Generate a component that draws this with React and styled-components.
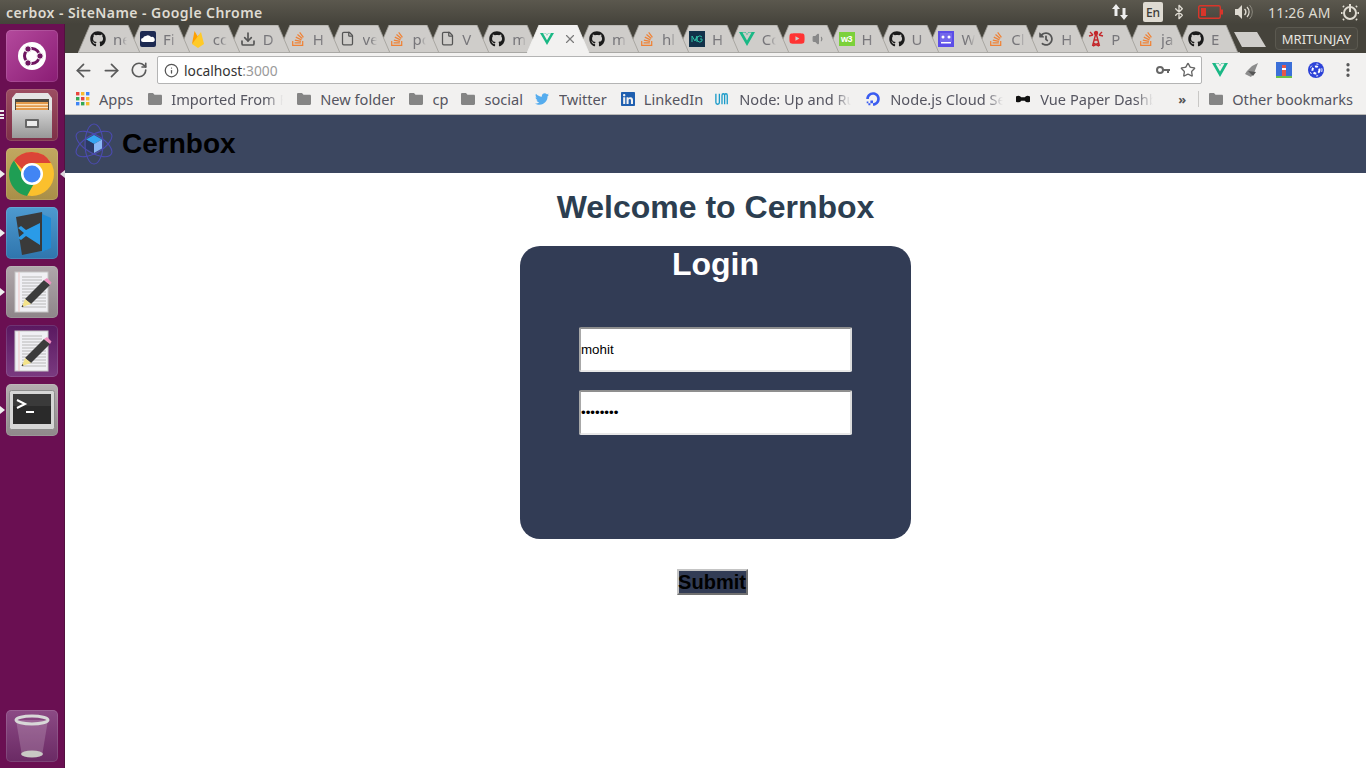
import React from 'react';
import styled, { createGlobalStyle } from 'styled-components';
import { FaGithub, FaStackOverflow, FaTwitter, FaLinkedin, FaYoutube, FaDigitalOcean, FaHistory } from 'react-icons/fa';
import { SiVuedotjs } from 'react-icons/si';
import { ArrowLeft, ArrowRight, RotateCw, Info, Star, Download, File, Volume1, X, Bluetooth, MoreVertical } from 'lucide-react';

const Global = createGlobalStyle`
  html, body { margin: 0; padding: 0; background: #fff; }
  #root { width: 1366px; height: 768px; overflow: hidden; }
  * { box-sizing: border-box; }
`;

const UI = `"Noto Sans", "Open Sans", sans-serif`;
const PAGE = `"Liberation Sans", Arial, sans-serif`;

const Desktop = styled.div`display: flex; flex-direction: column; width: 1366px; height: 768px;`;
const TopPanel = styled.header`
  height: 24px; flex: none; display: flex; align-items: center; padding: 0 0 0 6px;
  background: linear-gradient(#5b584e, #45433b);
  color: #dfdbd2; font: 600 14px ${UI};
`;
const WindowTitle = styled.div`flex: 1; letter-spacing: 0.44px;`;
const Indicators = styled.div`display: flex; align-items: center; height: 24px;`;
const EnBadge = styled.div`
  width: 20px; height: 20px; margin: 0 8px 0 14px; background: #dfdbd2; color: #3c3b37; border-radius: 2px;
  display: flex; align-items: center; justify-content: center; font: 500 12px ${UI};
`;
const Clock = styled.div`width: 61px; margin: 0 10px 0 14px; font: 400 14px ${UI}; letter-spacing: .2px; white-space: nowrap;`;
const Ind = styled.span`display: inline-flex; margin-right: ${p => p.$mr || 0}px;`;

const Below = styled.div`flex: 1; display: flex; min-height: 0;`;
const Launcher = styled.nav`
  width: 65px; flex: none; display: flex; flex-direction: column; gap: 7px; padding: 6px 0 6px 6px;
  background: #6a0f52; border-right: 1px solid #53103f;
`;
const Tile = styled.div`
  position: relative; width: 52px; height: 52px; border-radius: 5px; background: ${p => p.$bg};
  display: flex; align-items: center; justify-content: center; box-shadow: inset 0 0 0 1px rgba(255,255,255,.12);
  margin-top: ${p => p.$push ? 'auto' : '0'};
`;
const Pip = styled.span`
  position: absolute; top: 50%; margin-top: -4px; ${p => p.$right ? 'right: -7px; border-right: 5px solid #dcd6dc;' : 'left: -6px; border-left: 5px solid #eee;'}
  border-top: 4px solid transparent; border-bottom: 4px solid transparent; width: 0; height: 0;
`;
const Stack = styled.span`
  position: absolute; left: -6px; top: 21px; width: 4px; height: 9px;
  background: repeating-linear-gradient(#eee 0 2px, transparent 2px 3.5px);
`;

const Browser = styled.div`flex: 1; display: flex; flex-direction: column; min-width: 0;`;
const TabStrip = styled.div`
  height: 29px; flex: none; display: flex; align-items: flex-start; padding: 1px 0 0 13px; background: #45433b; position: relative;
`;
const TabItem = styled.div`
  position: relative; width: 64px; height: 28px; margin-right: -14.1px; flex: none; z-index: ${p => p.$z};
  display: flex; align-items: center; gap: 7px; padding: 0 0 1px 12px; color: #77767a; font: 400 15px ${UI};
`;
const TabShape = styled.svg`position: absolute; inset: 0; width: 64px; height: 28px; z-index: -1;`;
const TabFav = styled.span`width: 16px; height: 16px; flex: none; display: flex; align-items: center; justify-content: center;`;
const TabLabel = styled.span`
  width: 14px; overflow: hidden; white-space: nowrap; -webkit-mask-image: linear-gradient(90deg,#000 55%,transparent);
  mask-image: linear-gradient(90deg,#000 55%,transparent);
`;
const W3 = styled.span`
  width: 16px; height: 14px; background: #7bd13a; color: #fff; font: 700 9px ${PAGE}; display: flex; align-items: center; justify-content: center; letter-spacing: -.3px;
`;
const NewTab = styled.svg`position: absolute; left: 1169px; top: 8px; width: 32px; height: 15px;`;
const Profile = styled.div`
  position: absolute; left: 1210px; top: 3px; width: 83px; height: 23px; border: 1px solid #5b5950; border-radius: 4px; background: #4a4840;
  color: #e8e6e0; font: 400 13px ${UI}; display: flex; align-items: center; justify-content: center;
`;

const Toolbar = styled.div`
  height: 34px; flex: none; background: #f2f1f0; display: flex; align-items: center; padding: 0 0 0 4px; color: #5a5a5a;
`;
const NavBtn = styled.span`width: 28px; flex: none; display: flex; justify-content: center;`;
const Omnibox = styled.div`
  width: 1045px; height: 28px; margin: 0 2px 0 4px; background: #fff; border: 1px solid #b4b4b4; border-radius: 2px; flex: none;
  display: flex; align-items: center; padding: 0 5px 0 6px; font: 400 13.8px ${UI}; color: #333;
`;
const Host = styled.span`margin-left: 5px; flex: 1;`;
const Port = styled.span`color: #9a9a9a;`;
const ExtBtn = styled.span`width: 32px; display: flex; justify-content: center; flex: none;`;

const Bookmarks = styled.div`
  height: 28px; flex: none; background: #f2f1f0; border-bottom: 1px solid #b9b8b6; display: flex; align-items: center; padding: 0 0 3px 11px;
  color: #555560; font: 400 14.6px ${UI};
`;
const Bm = styled.div`display: flex; align-items: center; gap: ${p => p.$gap || 9}px; margin-right: ${p => p.$mr || 13}px; flex: none;`;
const BmIcon = styled.span`width: 14px; height: 16px; display: flex; align-items: center; justify-content: center; flex: none;`;
const BmText = styled.span`
  white-space: nowrap; overflow: hidden; ${p => p.$w ? `width: ${p.$w}px; -webkit-mask-image: linear-gradient(90deg,#000 85%,transparent); mask-image: linear-gradient(90deg,#000 85%,transparent);` : ''}
`;
const Chevrons = styled.span`margin: 0 12px 0 24px; font: 700 13px ${UI}; color: #555;`;
const Sep = styled.span`width: 1px; height: 16px; background: #c9c8c6; margin-right: 10px;`;

const Page = styled.main`flex: 1; background: #fff; display: flex; flex-direction: column; align-items: center; font-family: ${PAGE}; min-height: 0;`;
const AppBar = styled.div`
  align-self: stretch; height: 58px; flex: none; background: #3b465f; display: flex; align-items: center; padding: 0 0 0 10px; gap: 9px;
`;
const Brand = styled.div`font: 700 28px ${PAGE}; color: #000;`;
const Welcome = styled.h1`margin: 16px 0 20px; font: 700 32px/37px ${PAGE}; color: #2c3e50;`;
const LoginCard = styled.form`
  width: 391px; height: 293px; flex: none; border-radius: 20px; background: #323c55; display: flex; flex-direction: column; align-items: center;
`;
const LoginTitle = styled.h2`margin: 0 0 44px; font: 700 32px/37px ${PAGE}; color: #fff;`;
const Field = styled.input`
  width: 273px; height: 45px; flex: none; margin-bottom: 18px; padding: 1px 1px 1px 0; border-width: 2px; border-style: solid;
  border-color: #8f8f8f #dcdcdc #e8e8e8 #a8a8a8; border-radius: 2px; background: #fff;
  font: 400 13.33px ${PAGE}; color: #000; outline: none;
`;
const Submit = styled.button`
  margin: 30px 7px 0 0; width: 71px; height: 26px; padding: 0; background: #323c55; border: 2px outset #c4c4c4; color: #000; font: 700 20px ${PAGE};
  display: flex; align-items: center; justify-content: center;
`;

const GH = <FaGithub size={16} color="#1b1b1b" />;
const SO = <FaStackOverflow size={16} color="#ef8236" />;
const Firebase = (
  <svg width="16" height="18" viewBox="0 0 16 18">
    <path d="M2 14L4.500 1l3.500 6z" fill="#ffa000" />
    <path d="M2 14L9 5l2 3z" fill="#f57c00" />
    <path d="M2 14L11 2l3 12-6 4z" fill="#ffca28" />
  </svg>
);
const Tower = (
  <svg width="16" height="17" viewBox="0 0 16 17" fill="none" stroke="#c4262a" strokeWidth="1.400">
    <path d="M8 3L4.500 16M8 3l3.500 13M6 10h4M5 13l6 3M11 13l-6 3" />
    <path d="M2 2l3 3M14 2l-3 3M1 6l4-1M15 6l-4-1" />
    <circle cx="8" cy="3" r="1.500" fill="#c4262a" />
  </svg>
);
const tabs = [
  [GH, 'ne'],
  [<svg width="16" height="16" viewBox="0 0 16 16"><rect width="16" height="16" rx="2" fill="#1d2a52" /><path d="M3 11a2 2 0 0 1 0-4 3 3 0 0 1 3-2 3.500 3.500 0 0 1 5 1 2.500 2.500 0 0 1 2 5z" fill="#fff" /></svg>, 'Fi'],
  [Firebase, 'cc'],
  [<Download size={16} color="#555" strokeWidth={2.5} />, 'D'],
  [SO, 'H'],
  [<File size={15} color="#555" />, 've'],
  [SO, 'pc'],
  [<File size={15} color="#555" />, 'V'],
  [GH, 'm'],
  [<SiVuedotjs size={14} color="#1ab885" />, null],
  [GH, 'm'],
  [SO, 'hl'],
  [<svg width="16" height="16" viewBox="0 0 16 16"><rect width="16" height="16" fill="#12324a" /><path d="M3 11V5l3 5 2-5v6M13 6a3 3 0 1 0 0 4V8h-2" stroke="#2fc0a8" fill="none" /></svg>, 'H'],
  [<SiVuedotjs size={16} color="#1ab885" />, 'Cc'],
  [<FaYoutube size={17} color="#f33" />, 'sp'],
  [<W3>w3</W3>, 'H'],
  [GH, 'U'],
  [<svg width="16" height="16" viewBox="0 0 16 16"><rect width="16" height="16" fill="#5b4de8" /><rect x="2" y="2" width="12" height="9" fill="#fff" opacity=".15" /><circle cx="5" cy="6" r="1.500" fill="#fff" /><circle cx="11" cy="6" r="1.500" fill="#fff" /><path d="M3 11h10v1.500H3z" fill="#fff" /></svg>, 'W'],
  [SO, 'Cl'],
  [<FaHistory size={14} color="#555" />, 'H'],
  [Tower, 'P'],
  [SO, 'ja'],
  [GH, 'E'],
];

const Folder = () => (
  <svg width="14" height="12" viewBox="0 0 14 12"><path d="M0 1.200C0 .5.500 0 1.200 0H5l1.500 1.800h6.300c.7 0 1.200.5 1.200 1.200v7.800c0 .7-.5 1.200-1.200 1.200H1.200C.5 12 0 11.500 0 10.800z" fill="#858585" /></svg>
);

const AppGrid = () => {
  const c = ['#e8453c', '#f9bb2d', '#3f84f4', '#34a853', '#e8453c', '#f9bb2d', '#3f84f4', '#34a853', '#f9bb2d'];
  return (
    <svg width="14" height="14" viewBox="0 0 14 14">
      {c.map((f, i) => <rect key={i} x={(i % 3) * 5} y={Math.floor(i / 3) * 5} width="3.400" height="3.400" fill={f} />)}
    </svg>
  );
};

const Logo = () => (
  <svg width="38" height="42" viewBox="0 0 38 42" fill="none">
    <g stroke="#4b4bb0" strokeWidth="1.100">
      <ellipse cx="19" cy="21" rx="9" ry="20" />
      <ellipse cx="19" cy="21" rx="9" ry="20" transform="rotate(60 19 21)" />
      <ellipse cx="19" cy="21" rx="9" ry="20" transform="rotate(-60 19 21)" />
    </g>
    <path d="M19 12l8 4.500-8 4.500-8-4.500z" fill="#35a6f2" />
    <path d="M11 16.500l8 4.500v9l-8-4.500z" fill="#2c3a66" />
    <path d="M27 16.500l-8 4.500v9l8-4.500z" fill="#8ab8f5" />
  </svg>
);

const UbuntuIcon = () => (
  <svg width="36" height="36" viewBox="0 0 36 36">
    <circle cx="18" cy="18" r="14" fill="#fff" />
    <circle cx="18" cy="18" r="7.500" fill="none" stroke="#6f1560" strokeWidth="3" />
    <circle cx="26" cy="18" r="3.200" fill="#6f1560" stroke="#fff" />
    <circle cx="14" cy="11" r="3.200" fill="#6f1560" stroke="#fff" />
    <circle cx="14" cy="25" r="3.200" fill="#6f1560" stroke="#fff" />
  </svg>
);
const FilesIcon = () => (
  <svg width="42" height="46" viewBox="0 0 42 46">
    <defs>
      <linearGradient id="cab" x1="0" y1="0" x2="0" y2="1"><stop offset="0" stopColor="#d2d2d2" /><stop offset="1" stopColor="#989898" /></linearGradient>
    </defs>
    <path d="M5 1h32l4 5v40H1V6z" fill="#e4e4e4" />
    <rect x="4" y="7" width="34" height="12" fill="#4c4842" />
    <rect x="5" y="10" width="32" height="9" fill="#e39a4c" />
    <rect x="5" y="12" width="32" height="1.300" fill="#fbe3c0" />
    <rect x="5" y="15" width="32" height="1" fill="#fbe3c0" />
    <path d="M1 19l1-1h38l1 1v27H1z" fill="url(#cab)" />
    <rect x="14" y="27" width="14" height="9" rx="1" fill="#666" />
    <rect x="16" y="29" width="10" height="5" fill="#ececec" />
  </svg>
);
const ChromeIcon = () => (
  <svg width="46" height="46" viewBox="0 0 46 46">
    <circle cx="23" cy="23" r="22" fill="#fbc02d" />
    <path d="M23 1a22 22 0 0 1 19 11H23a11 11 0 0 0-10 6L5 9.500A22 22 0 0 1 23 1z" fill="#db4437" />
    <path d="M5 9.500l9 15a10 10 0 0 0 11 8l-7 12.500A22 22 0 0 1 5 9.500z" fill="#1f9e54" />
    <circle cx="23" cy="23" r="11" fill="#fff" />
    <circle cx="23" cy="23" r="8.500" fill="#4285f4" />
  </svg>
);
const CodeIcon = () => (
  <svg width="46" height="46" viewBox="0 0 46 46">
    <path d="M7 7l26-5 4 38-24 5z" fill="#3a3a3a" />
    <path d="M33 4l9 4v30l-9 4z" fill="#1e8bd6" />
    <path d="M31 13v22L17 26l-5 4-3-2 6-5-6-5 3-2 5 4z" fill="#2a9be8" />
  </svg>
);
const EditorIcon = () => (
  <svg width="40" height="42" viewBox="0 0 40 42">
    <rect x="3" y="1" width="33" height="40" fill="#f0f0f4" stroke="#c6c6c6" />
    <path d="M7 1v40" stroke="#f0c5c5" />
    {[6, 9, 12, 15, 18, 21, 24, 27, 30, 33, 36].map(y => <path key={y} d={`M10 ${y}h${y > 20 ? 24 : 20}`} stroke="#aaa" strokeWidth=".8" />)}
    <path d="M32 9l6 5-19 19-6-5z" fill="#3c3c3c" />
    <path d="M32 9l3-2 4.500 4.500-1.500 2.500z" fill="#ef8fc0" />
    <path d="M13 28l6 5-9 3z" fill="#f3e38a" />
    <path d="M10.500 34l-1 2 2-.6z" fill="#111" />
  </svg>
);
const TermIcon = () => (
  <svg width="46" height="40" viewBox="0 0 46 40">
    <rect x=".5" y=".5" width="45" height="39" rx="2" fill="#d6d6d6" stroke="#8d8d8d" />
    <rect x="4" y="4" width="38" height="30" fill="#2a2a2a" />
    <rect x="4" y="4" width="38" height="12" fill="#3a3a3a" />
    <path d="M8 10l8 4-8 4" fill="none" stroke="#fff" strokeWidth="2" />
    <path d="M17 22h8" stroke="#fff" strokeWidth="2" />
  </svg>
);
const TrashIcon = () => (
  <svg width="38" height="46" viewBox="0 0 38 46">
    <path d="M3 7l6 36h20l6-36z" fill="rgba(255,255,255,.18)" />
    <ellipse cx="19" cy="41" rx="11" ry="3.500" fill="#c9c9c5" />
    <ellipse cx="19" cy="7" rx="16" ry="4" fill="none" stroke="#d8d8d8" strokeWidth="3" />
  </svg>
);
const SpeakerIcon = () => (
  <svg width="20" height="18" viewBox="0 0 20 18" fill="none">
    <path d="M1 6h3l4-4v14l-4-4H1z" fill="#dfdbd2" />
    <path d="M10.500 6a4 4 0 0 1 0 6" stroke="#dfdbd2" strokeWidth="1.500" />
    <path d="M13 4a7 7 0 0 1 0 10" stroke="#dfdbd2" strokeWidth="1.200" />
    <path d="M15.500 2a10 10 0 0 1 0 14" stroke="#8c897f" />
  </svg>
);

const TabRow = ({ fav, label, i }) => {
  const active = i === 9;
  return (
    <TabItem $z={active ? 50 : 40 - i}>
      <TabShape viewBox="0 0 64 28">
        <path d="M0 28L12 0H50L62 28z" fill={active ? '#f2f1f0' : '#cfcdca'} />
        <path d="M0 28L12 0H50L62 28" fill="none" stroke={active ? '#f2f1f0' : '#9f9d98'} strokeWidth=".8" />
        {!active && <path d="M0 27.500H64" stroke="#a9a8a5" />}
      </TabShape>
      <TabFav>{fav}</TabFav>
      {i === 9 && <X size={14} color="#7a7a7a" style={{ marginLeft: 1 }} />}
      {i === 14 && <Volume1 size={14} color="#888" fill="#888" />}
      {label && i !== 14 && <TabLabel>{label}</TabLabel>}
    </TabItem>
  );
};

export default function App() {
  return (
    <Desktop>
      <Global />
      <TopPanel>
        <WindowTitle>cerbox - SiteName - Google Chrome</WindowTitle>
        <Indicators>
          <svg width="18" height="18" viewBox="0 0 18 18" fill="#eee"><path d="M5 1l4 5H6.500v7h-3V6H1z" /><path d="M13 17l4-5h-2.500V5h-3v7H9z" /></svg>
          <EnBadge>En</EnBadge>
          <Ind $mr={11}><Bluetooth size={16} color="#dfdbd2" /></Ind>
          <Ind $mr={11}>
            <svg width="25" height="14" viewBox="0 0 25 14"><rect x=".7" y=".7" width="21.600" height="12.600" rx="1.500" fill="none" stroke="#d9352a" strokeWidth="1.400" /><rect x="3" y="3" width="5" height="8" fill="#d9352a" /><rect x="23" y="4.500" width="2" height="5" fill="#d9352a" /></svg>
          </Ind>
          <SpeakerIcon />
          <Clock>11:26 AM</Clock>
          <Ind $mr={5}>
            <svg width="22" height="22" viewBox="0 0 22 22" fill="none" stroke="#dfdbd2" strokeWidth="2"><circle cx="11" cy="12" r="6" /><path d="M11 3v8" /><path d="M3.500 12H2M20 12h-1.500M5 18l-1 1M17 18l1 1M5 6L4 5M17 6l1-1" /></svg>
          </Ind>
        </Indicators>
      </TopPanel>
      <Below>
        <Launcher>
          <Tile $bg="linear-gradient(135deg,#b44a9d,#8a1c74)"><UbuntuIcon /></Tile>
          <Tile $bg="linear-gradient(#9c4d61,#7e3048)"><Stack /><FilesIcon /></Tile>
          <Tile $bg="linear-gradient(#c1a860,#a98f48)"><Pip /><Pip $right /><ChromeIcon /></Tile>
          <Tile $bg="linear-gradient(#4e9ad0,#2f75ad)"><Pip /><CodeIcon /></Tile>
          <Tile $bg="linear-gradient(#b0a7ab,#8e8589)"><Pip /><EditorIcon /></Tile>
          <Tile $bg="linear-gradient(#5a1860,#7a3a80)"><EditorIcon /></Tile>
          <Tile $bg="linear-gradient(#b5adb0,#8f888a)"><Pip /><TermIcon /></Tile>
          <Tile $push $bg="linear-gradient(#8c4a85,#6a2a64)"><TrashIcon /></Tile>
        </Launcher>
        <Browser>
          <TabStrip>
            {tabs.map(([f, l], i) => <TabRow key={i} fav={f} label={l} i={i} />)}
            <NewTab viewBox="0 0 32 15"><path d="M0 0H23L32 15H8z" fill="#cfcdca" /></NewTab>
            <Profile>MRITUNJAY</Profile>
          </TabStrip>
          <Toolbar>
            <NavBtn><ArrowLeft size={21} strokeWidth={2} /></NavBtn>
            <NavBtn><ArrowRight size={21} strokeWidth={2} /></NavBtn>
            <NavBtn><RotateCw size={18} strokeWidth={2.2} /></NavBtn>
            <Omnibox>
              <Info size={15} color="#555" />
              <Host>localhost<Port>:3000</Port></Host>
              <svg width="14" height="8" viewBox="0 0 14 8" style={{ marginRight: 10 }}><circle cx="4" cy="4" r="3" fill="none" stroke="#666" strokeWidth="2" /><path d="M7 3h7v2h-1v2h-2V5H7z" fill="#666" /></svg>
              <Star size={16} color="#666" />
            </Omnibox>
            <ExtBtn><SiVuedotjs size={16} color="#1ab885" /></ExtBtn>
            <ExtBtn>
              <svg width="16" height="16" viewBox="0 0 16 16"><path d="M14 1L8 4 3 9l-2 3 6 3 3-4z" fill="#8c8c8c" /><path d="M4 9l8 1-3 4z" fill="#555" /></svg>
            </ExtBtn>
            <ExtBtn>
              <svg width="16" height="16" viewBox="0 0 16 16"><rect width="16" height="16" fill="#3b6fd8" /><rect x="6" y="3" width="4" height="11" fill="#e6574a" /><rect x="6" y="6" width="4" height="2" fill="#fff" /><rect y="14" width="16" height="2" fill="#6cc04a" /></svg>
            </ExtBtn>
            <ExtBtn>
              <svg width="16" height="16" viewBox="0 0 16 16"><circle cx="8" cy="8" r="8" fill="#2d43d8" /><circle cx="8" cy="8" r="3.500" fill="none" stroke="#fff" strokeWidth="2" strokeDasharray="3 2" /><circle cx="8" cy="8" r="6" fill="none" stroke="#fff" strokeDasharray="2 5" /></svg>
            </ExtBtn>
            <ExtBtn><MoreVertical size={18} color="#555" strokeWidth={2.4} /></ExtBtn>
          </Toolbar>
          <Bookmarks>
            <Bm $mr={15}><BmIcon><AppGrid /></BmIcon><BmText>Apps</BmText></Bm>
            <Bm $mr={14}><BmIcon><Folder /></BmIcon><BmText $w={112}>Imported From F</BmText></Bm>
            <Bm $mr={14}><BmIcon><Folder /></BmIcon><BmText>New folder</BmText></Bm>
            <Bm><BmIcon><Folder /></BmIcon><BmText>cp</BmText></Bm>
            <Bm $mr={12}><BmIcon><Folder /></BmIcon><BmText>social</BmText></Bm>
            <Bm $gap={10} $mr={14}><BmIcon><FaTwitter size={16} color="#55acee" /></BmIcon><BmText>Twitter</BmText></Bm>
            <Bm $mr={12}><BmIcon><FaLinkedin size={16} color="#1f5fb0" /></BmIcon><BmText>LinkedIn</BmText></Bm>
            <Bm $gap={10} $mr={15}>
              <BmIcon><svg width="16" height="16" viewBox="0 0 16 16" fill="none" stroke="#1a9bc9" strokeWidth="1.500"><path d="M1 2v10q0 2 2 2t2-2V2M8 14V4q0-2 1.500-2T11 4v10M11 4q0-2 1.500-2T14 4v10" /></svg></BmIcon>
              <BmText $w={112}>Node: Up and Ru</BmText>
            </Bm>
            <Bm $gap={10}><BmIcon><FaDigitalOcean size={16} color="#3b5cf0" /></BmIcon><BmText $w={113}>Node.js Cloud Se</BmText></Bm>
            <Bm $gap={10} $mr={1}>
              <BmIcon><svg width="16" height="8" viewBox="0 0 16 8"><path d="M0 1q4-2 6 1h4q2-3 6-1v6q-4 2-6-1H6Q4 9 0 7z" fill="#111" /></svg></BmIcon>
              <BmText $w={113}>Vue Paper Dashb</BmText>
            </Bm>
            <Chevrons>»</Chevrons>
            <Sep />
            <Bm $mr={1}><BmIcon><Folder /></BmIcon><BmText>Other bookmarks</BmText></Bm>
          </Bookmarks>
          <Page>
            <AppBar><Logo /><Brand>Cernbox</Brand></AppBar>
            <Welcome>Welcome to Cernbox</Welcome>
            <LoginCard>
              <LoginTitle>Login</LoginTitle>
              <Field type="text" value="mohit" readOnly />
              <Field type="password" value="password" readOnly />
            </LoginCard>
            <Submit type="button">Submit</Submit>
          </Page>
        </Browser>
      </Below>
    </Desktop>
  );
}
